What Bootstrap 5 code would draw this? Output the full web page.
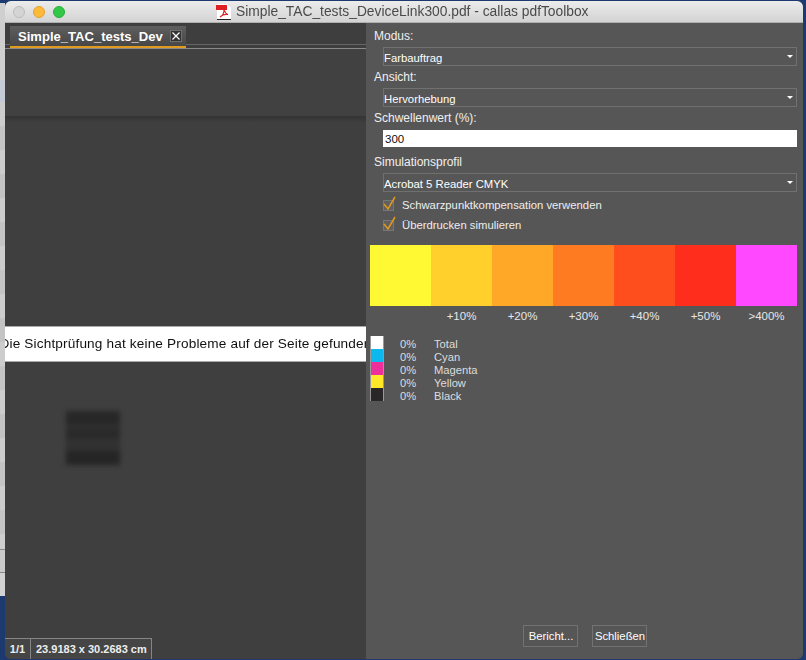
<!DOCTYPE html>
<html lang="de">
<head>
<meta charset="utf-8">
<title>callas pdfToolbox</title>
<link href="https://cdn.jsdelivr.net/npm/bootstrap@5.3.0/dist/css/bootstrap.min.css" rel="stylesheet">
<script src="https://cdn.jsdelivr.net/npm/bootstrap@5.3.0/dist/js/bootstrap.bundle.min.js"></script>
<style>
html,body{height:660px;overflow:hidden;background:#1c3a70;}
body{font-family:"Liberation Sans",Arial,sans-serif;font-size:11.3px;color:#eee;}
.stage{width:806px;height:660px;filter:blur(.3px);}
.deskstrip{width:5px;background:#c9c9c9;}
.ds-a{height:3px;background:#1c3a70;}
.ds-b{height:77px;background:#cfcfcf;}
.ds-c{height:22px;background:#c4cad6;}
.ds-d{flex:1 1 auto;background:repeating-linear-gradient(#cdcdcd 0 24px,#c4c4c4 24px 48px);}
.ds-g{height:23px;background:#cbcbcb;border-top:1px solid #888;}
.ds-e{height:24px;background:#d2d2d2;border-top:1px solid #888;}
.ds-f{height:64px;background:#1c3a70;}
.appwin{width:798px;height:658px;margin-top:1px;border-radius:6px;overflow:hidden;background:#565656;}
.titlebar{height:22px;flex:none;background:linear-gradient(#ececec,#d3d3d3);border-bottom:1px solid #b0b0b0;position:relative;}
.lights{padding-left:8px;gap:8px;}
.light{width:12px;height:12px;border-radius:50%;}
.l-off{background:#d4d4d4;border:1px solid #bdbdbd;}
.l-min{background:#fdb93a;border:1px solid #e5a22e;}
.l-max{background:#33c748;border:1px solid #2aae3c;}
.titletext{position:absolute;left:211px;top:2px;font-size:13.8px;line-height:18px;color:#4a4a4a;white-space:nowrap;gap:4px;}
.leftpane{width:361px;background:#3f3f3f;}
.tabstrip{height:26px;flex:none;padding:3px 0 0 5px;background:#3e3e3e;border-bottom:1px solid #8a8a8a;position:relative;box-shadow:inset 0 -3px 0 #3e3e3e,inset 0 -4px 0 #666;}
.doctab{width:176px;height:22px;background:linear-gradient(#5e5e5e,#474747);border-bottom:2px solid #e09a1f;padding:0 4px 0 8px;position:relative;z-index:1;color:#fff;font-weight:700;font-size:13.05px;line-height:17px;box-sizing:border-box;}
.tabclose{width:12px;height:12px;margin-left:auto;margin-right:0;border:1px solid #6f6f6f;background:#333;display:flex;align-items:center;justify-content:center;}
.toolband{height:67px;flex:none;background:#414141;}
.canvasarea{flex:1 1 auto;min-height:0;background:linear-gradient(#343434,#3f3f3f 7px);padding-top:210px;}
.msgbar{height:36px;background:#fff;border-top:1px solid #aaa;border-bottom:1px solid #aaa;color:#111;font-size:13.6px;letter-spacing:.16px;white-space:nowrap;overflow:hidden;}
.blurbox{width:54px;height:54px;margin:49px 0 0 61px;background:linear-gradient(#272727 0 13px,#2f2f2f 13px 19px,#292929 19px 27px,#313131 27px 40px,#252525 40px 54px);filter:blur(2.5px);}
.statusbar{height:21px;flex:none;margin-top:auto;border-top:1px solid #858585;font-weight:700;font-size:11px;color:#eee;line-height:20px;background:#454545;width:147px;border-right:1px solid #858585;}
.st-a{width:26px;text-align:center;border-right:1px solid #858585;}
.st-b{padding-left:5px;}
.rightpane{flex:1 1 auto;padding:5px 6px 0 4px;background:#565656;min-width:0;}
.fldlabel{display:block;margin:0 0 0 4px;line-height:16px;color:#f0f0f0;font-size:12px;}
.form-select.macsel{height:19px;min-height:0;margin:3px 0 3px 13px;width:414px;padding:3px 16px 0 0;border:1px solid #707070;border-radius:0;font-size:11.3px;line-height:14px;color:#fff;background-color:#565656;background-size:6px 3px;background-position:right 3px center;background-image:url("data:image/svg+xml,%3csvg xmlns='http://www.w3.org/2000/svg' viewBox='0 0 8 4'%3e%3cpath fill='%23fff' d='M0 0h8L4 4z'/%3e%3c/svg%3e");box-shadow:none;}
.form-control.macinp{height:17px;min-height:0;margin:4px 0 0 13px;width:414px;padding:1px 2px 0;border:0;border-radius:0;font-size:11.5px;line-height:16px;color:#111;background:#fff;}
.lblgap{margin-top:7px;}
.chkrow{margin:0 0 0 13px;height:20px;gap:9px;color:#eee;font-size:11.3px;cursor:default;}
.chkwrap{position:relative;width:10px;height:10px;flex:none;display:block;}
.chkbox{display:block;appearance:none;width:11px;height:11px;margin:0;border:1px solid #777;background:#606060;border-radius:0;}
.chkmark{position:absolute;left:0;top:-4px;}
.ramp{height:61px;margin-top:10px;}
.ramp>div,.ramplabels>div{flex:1 1 0;}
.ramplabels{height:20px;line-height:20px;text-align:center;color:#e6e6e6;font-size:11.5px;}
.legendlist{margin-top:10px;}
.legrow{height:13px;line-height:17px;color:#ddd;font-size:11.2px;}
.legswatch{width:14px;height:13px;background:#fff;border-left:1px solid #999;border-right:1px solid #999;flex:none;}
.legpct{width:50px;padding-left:16px;flex:none;}
.macbtn{height:22px;width:55px;padding:0 0 0 2px;border:1px solid #727272;border-radius:0;background:#565656;color:#fff;font-size:11.3px;line-height:20px;}
.footbtns{margin-top:auto;gap:14px;padding-bottom:12px;padding-left:2px;}
</style>
</head>
<body class="m-0">
<div class="stage d-flex">
  <div class="deskstrip d-flex flex-column flex-none">
    <div class="ds-a"></div><div class="ds-b"></div><div class="ds-c"></div><div class="ds-d"></div><div class="ds-g"></div><div class="ds-e"></div><div class="ds-f"></div>
  </div>
  <div class="appwin d-flex flex-column">
    <div class="titlebar d-flex align-items-center">
      <div class="lights d-flex"><span class="light l-off"></span><span class="light l-min"></span><span class="light l-max"></span></div>
      <div class="titletext d-flex align-items-center">
        <svg width="16" height="16" viewBox="0 0 16 16"><path fill="#fff" d="M1 0h10l4 4v11H1z"/><path fill="#e02020" d="M0 1h11v5H0z"/><path fill="none" stroke="#d82020" stroke-width="1.1" d="M8 6c0 3-2 6-4 7 2-2 5-3 8-2.5-2-.5-3-2-4-4.5z"/><path fill="#222" d="M1 15h14v1H1z"/></svg>
        <span>Simple_TAC_tests_DeviceLink300.pdf - callas pdfToolbox</span>
      </div>
    </div>
    <div class="d-flex flex-grow-1" style="min-height:0">
      <div class="leftpane d-flex flex-column">
        <div class="tabstrip">
          <div class="doctab d-flex align-items-center"><span>Simple_TAC_tests_Dev</span><span class="tabclose"><svg width="8" height="8" viewBox="0 0 8 8"><path stroke="#fff" stroke-width="1.2" d="M.5.5l7 7M7.500.5l-7 7"/></svg></span></div>
        </div>
        <div class="toolband"></div>
        <div class="canvasarea d-flex flex-column">
          <div class="msgbar d-flex align-items-center justify-content-center"><span class="flex-shrink-0">Die Sichtprüfung hat keine Probleme auf der Seite gefunden</span></div>
          <div class="blurbox"></div>
          <div class="statusbar d-flex"><div class="st-a">1/1</div><div class="st-b">23.9183 x 30.2683 cm</div></div>
        </div>
      </div>
      <div class="rightpane d-flex flex-column">
        <label class="fldlabel">Modus:</label>
        <select class="form-select macsel"><option>Farbauftrag</option></select>
        <label class="fldlabel">Ansicht:</label>
        <select class="form-select macsel"><option>Hervorhebung</option></select>
        <label class="fldlabel">Schwellenwert (%):</label>
        <input class="form-control macinp" type="text" value="300">
        <label class="fldlabel lblgap">Simulationsprofil</label>
        <select class="form-select macsel"><option>Acrobat 5 Reader CMYK</option></select>
        <label class="chkrow d-flex align-items-center">
          <span class="chkwrap"><input class="chkbox" type="checkbox" checked><svg class="chkmark" width="14" height="15" viewBox="0 0 14 15"><path fill="none" stroke="#e0991f" stroke-width="1.5" d="M1 8l4 5 7-12"/></svg></span>
          <span>Schwarzpunktkompensation verwenden</span>
        </label>
        <label class="chkrow d-flex align-items-center">
          <span class="chkwrap"><input class="chkbox" type="checkbox" checked><svg class="chkmark" width="14" height="15" viewBox="0 0 14 15"><path fill="none" stroke="#e0991f" stroke-width="1.5" d="M1 8l4 5 7-12"/></svg></span>
          <span>Überdrucken simulieren</span>
        </label>
        <div class="ramp d-flex">
          <div style="background:#fff933"></div><div style="background:#ffd02c"></div><div style="background:#ffa828"></div><div style="background:#ff7b22"></div><div style="background:#ff4e1e"></div><div style="background:#ff2d1c"></div><div style="background:#ff48ff"></div>
        </div>
        <div class="ramplabels d-flex"><div></div><div>+10%</div><div>+20%</div><div>+30%</div><div>+40%</div><div>+50%</div><div>&gt;400%</div></div>
        <div class="legendlist">
          <div class="legrow d-flex"><span class="legswatch" style="background:#fff"></span><span class="legpct">0%</span><span>Total</span></div>
          <div class="legrow d-flex"><span class="legswatch" style="background:#0db8ee"></span><span class="legpct">0%</span><span>Cyan</span></div>
          <div class="legrow d-flex"><span class="legswatch" style="background:#ee2f9b"></span><span class="legpct">0%</span><span>Magenta</span></div>
          <div class="legrow d-flex"><span class="legswatch" style="background:#ffe827"></span><span class="legpct">0%</span><span>Yellow</span></div>
          <div class="legrow d-flex"><span class="legswatch" style="background:#2a2729"></span><span class="legpct">0%</span><span>Black</span></div>
        </div>
        <div class="footbtns d-flex justify-content-center">
          <button type="button" class="btn macbtn">Bericht...</button>
          <button type="button" class="btn macbtn">Schließen</button>
        </div>
      </div>
    </div>
  </div>
</div>
</body>
</html>
